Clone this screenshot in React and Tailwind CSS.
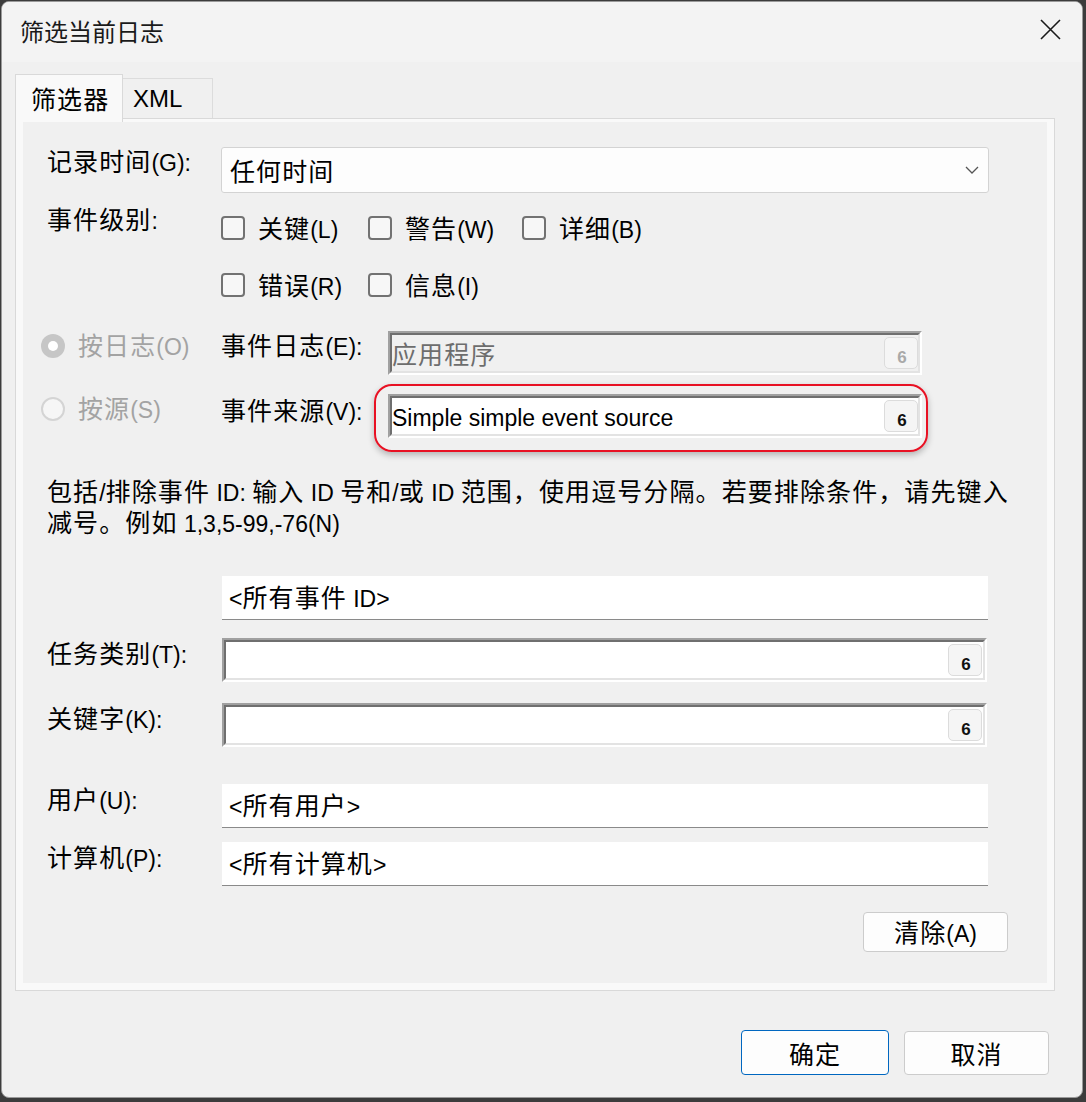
import React from "react";

const font = "font-['Noto_Sans_CJK_SC',sans-serif]";
const CJK = /([\u2e80-\u9fff\u3000-\u303f\uff00-\uffef]+)/;

// CJK runs get a little tracking, latin runs a narrower face, like YaHei UI
function T({ children }) {
  return String(children)
    .split(CJK)
    .map((p, i) =>
      p === "" ? null : CJK.test(p) ? (
        <span key={i} className="tracking-[1.1px]">
          {p}
        </span>
      ) : (
        <span key={i} className="font-['Liberation_Sans',sans-serif] text-[23px]">
          {p}
        </span>
      )
    );
}

function PickButton({ disabled }) {
  return (
    <div className="flex h-[32px] w-[34px] shrink-0 items-end justify-center rounded-[5px] border border-[#dcdcdc] bg-[#f5f5f5] pb-[2px] pl-[2px]">
      <span
        className={
          disabled
            ? "font-['Liberation_Sans',sans-serif] text-[17px] font-bold leading-[16px] text-[#a9a9a9]"
            : "font-['Liberation_Sans',sans-serif] text-[17px] font-bold leading-[16px] text-[#111111]"
        }
      >
        6
      </span>
    </div>
  );
}

function Sunken({ className, disabled, children }) {
  return (
    <div className={"border-2 border-t-[#a0a0a0] border-l-[#a0a0a0] border-b-white border-r-white " + className}>
      <div
        className={
          disabled
            ? "flex h-full w-full items-center border-2 border-t-[#6f6f6f] border-l-[#6f6f6f] border-b-[#e3e3e3] border-r-[#e3e3e3] bg-[#f0f0f0]"
            : "flex h-full w-full items-center border-2 border-t-[#6f6f6f] border-l-[#6f6f6f] border-b-[#e3e3e3] border-r-[#e3e3e3] bg-white"
        }
      >
        {children}
      </div>
    </div>
  );
}

function Check({ label, width }) {
  return (
    <div className="flex items-center" style={{ width }}>
      <div className="h-[24px] w-[24px] rounded-[4px] border-2 border-[#727272] bg-[#f7f7f7]" />
      <span className="ml-[13px] leading-[28px]">
        <T>{label}</T>
      </span>
    </div>
  );
}

function PlainBox({ text }) {
  return (
    <div className="flex h-[44px] w-[766px] items-center border-b border-[#8a8a8a] bg-white pl-[7px]">
      <span className="leading-[30px]">
        <T>{text}</T>
      </span>
    </div>
  );
}

function Label({ children, className }) {
  return (
    <div className={"w-[175px] shrink-0 " + className}>
      <T>{children}</T>
    </div>
  );
}

export default function App() {
  return (
    <div className={"h-[1102px] w-[1086px] overflow-hidden bg-[#3c3c3c] pt-[1px] text-[25px] text-black " + font}>
      <div className="ml-[1px] flex h-[1097px] w-[1082px] flex-col overflow-hidden rounded-[8px] border border-[#9a9a9a] bg-[#f0f0f0]">
        {/* title bar */}
        <div className="flex h-[60px] shrink-0 items-center justify-between bg-[#f3f3f3] pb-[3px] pl-[18px] pr-[21px]">
          <span className="text-[24px] leading-[30px] text-[#1a1a1a]">筛选当前日志</span>
          <svg width="21" height="21" viewBox="0 0 21 21" className="mb-[2px]">
            <path d="M1 1 L20 20 M20 1 L1 20" stroke="#1a1a1a" strokeWidth="1.6" fill="none" />
          </svg>
        </div>

        {/* tabs */}
        <div className="ml-[13px] mt-[12px] flex items-end">
          <div className="relative z-10 -mb-[4px] flex h-[48px] w-[108px] items-start border-l border-r border-t border-[#d9d9d9] bg-[#f9f9f9] pl-[15px] pt-[7px] leading-[32px]">
            <T>筛选器</T>
          </div>
          <div className="flex h-[40px] w-[90px] items-start border-r border-t border-[#dcdcdc] bg-[#f0f0f0] pl-[10px] pt-[4px] leading-[32px]">
            <span className="font-['Liberation_Sans',sans-serif] text-[24px]">XML</span>
          </div>
        </div>

        {/* panel */}
        <div className="ml-[13px] h-[873px] w-[1040px] border border-[#d9d9d9] bg-[#f9f9f9] px-[7px] pb-[7px] pt-[3px]">
          <div className="flex h-full w-full flex-col bg-[#f0f0f0] pl-[24px] pt-[25px]">
            {/* 记录时间 */}
            <div className="flex h-[46px]">
              <div className="w-[174px] leading-[26px]">
                <T>记录时间(G):</T>
              </div>
              <div className="flex h-[46px] w-[768px] items-center justify-between rounded-[3px] border border-[#d3d3d3] bg-[#fdfdfd] pl-[8px] pr-[9px]">
                <span className="leading-[30px]">
                  <T>任何时间</T>
                </span>
                <svg width="14" height="8" viewBox="0 0 14 8">
                  <path d="M1 1 L7 7 L13 1" stroke="#555" strokeWidth="1.3" fill="none" />
                </svg>
              </div>
            </div>

            {/* 事件级别 */}
            <div className="mt-[12px] flex">
              <div className="w-[174px] leading-[26px]">
                <T>事件级别:</T>
              </div>
              <div className="flex flex-col">
                <div className="mt-[11px] flex h-[24px] items-center">
                  <Check label="关键(L)" width={147} />
                  <Check label="警告(W)" width={154} />
                  <Check label="详细(B)" width={150} />
                </div>
                <div className="mt-[33px] flex h-[24px] items-center">
                  <Check label="错误(R)" width={147} />
                  <Check label="信息(I)" width={154} />
                </div>
              </div>
            </div>

            {/* 按日志 */}
            <div className="-ml-[6px] mt-[34px] flex h-[44px] items-start">
              <div className="flex w-[180px] items-center">
                <div className="flex h-[24px] w-[24px] items-center justify-center rounded-full bg-[#c6c6c6]">
                  <div className="h-[10px] w-[10px] rounded-full bg-white" />
                </div>
                <span className="ml-[13px] leading-[26px] text-[#a3a3a3]">
                  <T>按日志(O)</T>
                </span>
              </div>
              <div className="w-[167px] leading-[26px]">
                <T>事件日志(E):</T>
              </div>
              <Sunken className="h-[44px] w-[534px]" disabled>
                <span className="flex-1 leading-[30px] text-[#6d6d6d]">
                  <T>应用程序</T>
                </span>
                <PickButton disabled />
              </Sunken>
            </div>

            {/* 按源 */}
            <div className="-ml-[6px] mt-[19px] flex h-[44px] items-start">
              <div className="flex w-[180px] items-center">
                <div className="h-[24px] w-[24px] rounded-full border-2 border-[#d4d4d4] bg-[#f6f6f6]" />
                <span className="ml-[13px] leading-[26px] text-[#a3a3a3]">
                  <T>按源(S)</T>
                </span>
              </div>
              <div className="w-[167px] leading-[30px]">
                <T>事件来源(V):</T>
              </div>
              <div className="relative">
                <Sunken className="h-[44px] w-[534px]">
                  <span className="flex-1 leading-[30px]">
                    <T>Simple simple event source</T>
                  </span>
                  <PickButton />
                </Sunken>
                <div className="pointer-events-none absolute -left-[14px] -top-[10px] h-[68px] w-[554px] rounded-[18px] border-2 border-[#e81123] shadow-[0_3px_6px_rgba(0,0,0,0.25)]" />
              </div>
            </div>

            {/* description */}
            <div className="mt-[37px] whitespace-nowrap">
              <div className="h-[31px] leading-[31px]">
                <T>包括/排除事件 ID: 输入 ID 号和/或 ID 范围，使用逗号分隔。若要排除条件，请先键入</T>
              </div>
              <div className="h-[31px] leading-[31px]">
                <T>减号。例如 1,3,5-99,-76(N)</T>
              </div>
            </div>

            <div className="ml-[175px] mt-[39px]">
              <PlainBox text="<所有事件 ID>" />
            </div>

            {/* 任务类别 */}
            <div className="mt-[18px] flex h-[44px]">
              <Label className="leading-[28px]">任务类别(T):</Label>
              <Sunken className="h-[44px] w-[765px]">
                <span className="flex-1" />
                <div className="mr-[1px]">
                  <PickButton />
                </div>
              </Sunken>
            </div>

            {/* 关键字 */}
            <div className="mt-[21px] flex h-[44px]">
              <Label className="leading-[28px]">关键字(K):</Label>
              <Sunken className="h-[44px] w-[765px]">
                <span className="flex-1" />
                <div className="mr-[1px]">
                  <PickButton />
                </div>
              </Sunken>
            </div>

            {/* 用户 */}
            <div className="mt-[37px] flex h-[44px]">
              <Label className="leading-[28px]">用户(U):</Label>
              <PlainBox text="<所有用户>" />
            </div>

            {/* 计算机 */}
            <div className="mt-[14px] flex h-[44px]">
              <Label className="leading-[28px]">计算机(P):</Label>
              <PlainBox text="<所有计算机>" />
            </div>

            <div className="ml-[816px] mt-[26px] flex h-[40px] w-[145px] items-center justify-center rounded-[4px] border border-[#cccccc] bg-[#fdfdfd] leading-[30px]">
              <span>
                <T>清除(A)</T>
              </span>
            </div>
          </div>
        </div>

        {/* footer buttons */}
        <div className="mr-[33px] mt-[39px] flex justify-end gap-[15px]">
          <div className="flex h-[45px] w-[148px] items-center justify-center rounded-[4px] border border-[#0067c0] bg-[#fdfdfd] leading-[30px]">
            <T>确定</T>
          </div>
          <div className="mt-[1px] flex h-[44px] w-[145px] items-center justify-center rounded-[4px] border border-[#cccccc] bg-[#fdfdfd] leading-[30px]">
            <T>取消</T>
          </div>
        </div>
      </div>
    </div>
  );
}
